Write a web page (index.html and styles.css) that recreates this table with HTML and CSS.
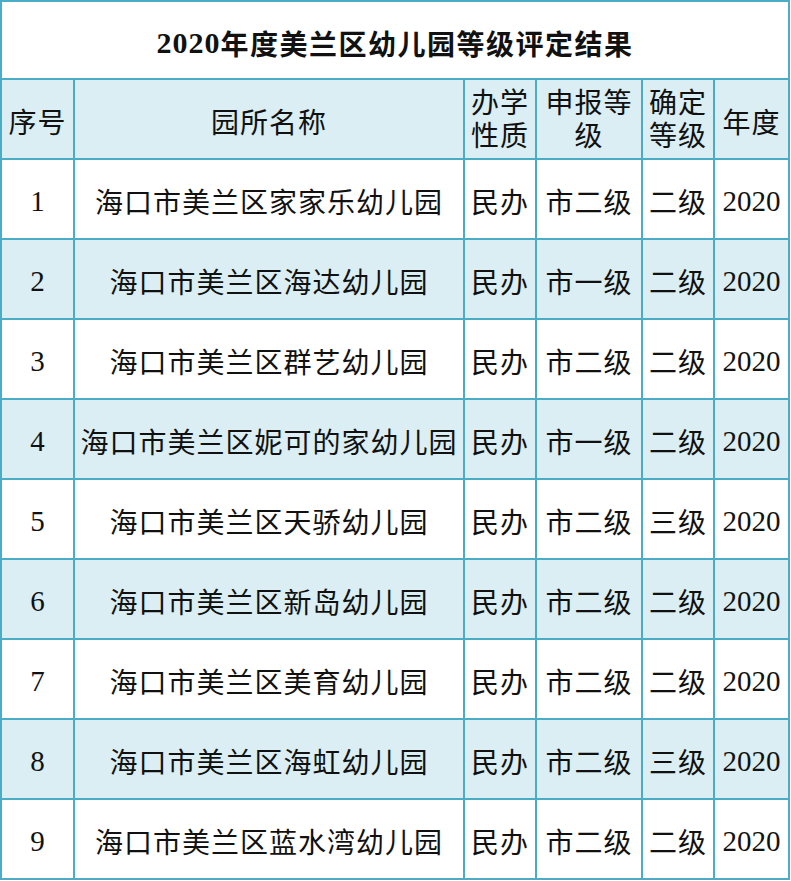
FILE: index.html
```html
<!DOCTYPE html>
<html lang="zh-CN">
<head>
<meta charset="utf-8">
<title>2020年度美兰区幼儿园等级评定结果</title>
<link rel="stylesheet" href="styles.css">
</head>
<body>
<div class="sheet">
  <div class="cell title"><span class="tnum">2020</span>年度美兰区幼儿园等级评定结果</div>

  <div class="cell head">序号</div>
  <div class="cell head">园所名称</div>
  <div class="cell head two">办学<br>性质</div>
  <div class="cell head two">申报等<br>级</div>
  <div class="cell head two">确定<br>等级</div>
  <div class="cell head">年度</div>

  <div class="cell num">1</div><div class="cell">海口市美兰区家家乐幼儿园</div><div class="cell">民办</div><div class="cell">市二级</div><div class="cell">二级</div><div class="cell num">2020</div>
  <div class="cell num alt">2</div><div class="cell alt">海口市美兰区海达幼儿园</div><div class="cell alt">民办</div><div class="cell alt">市一级</div><div class="cell alt">二级</div><div class="cell num alt">2020</div>
  <div class="cell num">3</div><div class="cell">海口市美兰区群艺幼儿园</div><div class="cell">民办</div><div class="cell">市二级</div><div class="cell">二级</div><div class="cell num">2020</div>
  <div class="cell num alt">4</div><div class="cell alt">海口市美兰区妮可的家幼儿园</div><div class="cell alt">民办</div><div class="cell alt">市一级</div><div class="cell alt">二级</div><div class="cell num alt">2020</div>
  <div class="cell num">5</div><div class="cell">海口市美兰区天骄幼儿园</div><div class="cell">民办</div><div class="cell">市二级</div><div class="cell">三级</div><div class="cell num">2020</div>
  <div class="cell num alt">6</div><div class="cell alt">海口市美兰区新岛幼儿园</div><div class="cell alt">民办</div><div class="cell alt">市二级</div><div class="cell alt">二级</div><div class="cell num alt">2020</div>
  <div class="cell num">7</div><div class="cell">海口市美兰区美育幼儿园</div><div class="cell">民办</div><div class="cell">市二级</div><div class="cell">二级</div><div class="cell num">2020</div>
  <div class="cell num alt">8</div><div class="cell alt">海口市美兰区海虹幼儿园</div><div class="cell alt">民办</div><div class="cell alt">市二级</div><div class="cell alt">三级</div><div class="cell num alt">2020</div>
  <div class="cell num">9</div><div class="cell">海口市美兰区蓝水湾幼儿园</div><div class="cell">民办</div><div class="cell">市二级</div><div class="cell">二级</div><div class="cell num">2020</div>
</div>
</body>
</html>
```

FILE: styles.css
```css
html, body {
  margin: 0;
  padding: 0;
  background: #ffffff;
}

.sheet {
  display: grid;
  grid-template-columns: 73px 390px 72px 106px 72px 75px;
  grid-template-rows: 78px repeat(10, 80px);
  width: 788px;
  border-left: 2px solid #4bacc6;
  border-top: 2px solid #4bacc6;
  font-family: "Liberation Serif", "Noto Sans CJK SC", serif;
  font-size: 28px;
  letter-spacing: 1px;
  color: #111111;
}

.cell {
  box-sizing: border-box;
  display: flex;
  align-items: center;
  justify-content: center;
  text-align: center;
  padding-top: 4px;
  border-right: 2px solid #4bacc6;
  border-bottom: 2px solid #4bacc6;
  white-space: nowrap;
  overflow: hidden;
}

.num {
  font-size: 29px;
  letter-spacing: 0;
  padding-top: 5px;
}

.title {
  grid-column: 1 / -1;
  font-weight: bold;
  letter-spacing: 1.5px;
  padding-top: 6px;
}

.tnum {
  font-size: 30px;
  letter-spacing: 1px;
}

.head,
.alt {
  background: #daeef3;
}

.two {
  line-height: 33px;
  padding-top: 2px;
}
```
